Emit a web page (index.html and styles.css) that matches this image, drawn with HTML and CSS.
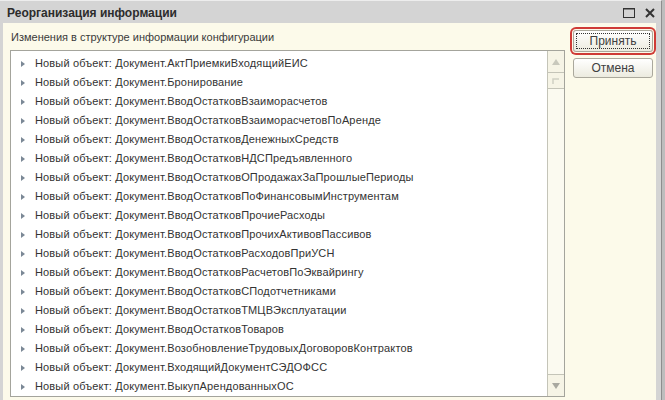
FILE: index.html
```html
<!DOCTYPE html>
<html lang="ru">
<head>
<meta charset="utf-8">
<title>Реорганизация информации</title>
<link rel="stylesheet" href="styles.css">
</head>
<body>
<div class="window">
  <div class="titlebar">
    <div class="title">Реорганизация информации</div>
    <div class="tb-icons">
      <svg class="tb-max" width="12" height="10" viewBox="0 0 12 10"><rect x="0.5" y="0.5" width="11" height="9" fill="none" stroke="#333" stroke-width="1"/><line x1="0" y1="1" x2="12" y2="1" stroke="#333" stroke-width="1"/></svg>
      <svg class="tb-close" width="10" height="10" viewBox="0 0 10 10"><path d="M1 1 L9 9 M9 1 L1 9" stroke="#333" stroke-width="2"/></svg>
    </div>
  </div>
  <div class="client">
    <div class="main">
      <div class="label">Изменения в структуре информации конфигурации</div>
      <div class="listbox">
        <div class="rows">
          <div class="row"><span class="tri"></span>Новый объект: Документ.АктПриемкиВходящийЕИС</div>
          <div class="row"><span class="tri"></span>Новый объект: Документ.Бронирование</div>
          <div class="row"><span class="tri"></span>Новый объект: Документ.ВводОстатковВзаиморасчетов</div>
          <div class="row"><span class="tri"></span>Новый объект: Документ.ВводОстатковВзаиморасчетовПоАренде</div>
          <div class="row"><span class="tri"></span>Новый объект: Документ.ВводОстатковДенежныхСредств</div>
          <div class="row"><span class="tri"></span>Новый объект: Документ.ВводОстатковНДСПредъявленного</div>
          <div class="row"><span class="tri"></span>Новый объект: Документ.ВводОстатковОПродажахЗаПрошлыеПериоды</div>
          <div class="row"><span class="tri"></span>Новый объект: Документ.ВводОстатковПоФинансовымИнструментам</div>
          <div class="row"><span class="tri"></span>Новый объект: Документ.ВводОстатковПрочиеРасходы</div>
          <div class="row"><span class="tri"></span>Новый объект: Документ.ВводОстатковПрочихАктивовПассивов</div>
          <div class="row"><span class="tri"></span>Новый объект: Документ.ВводОстатковРасходовПриУСН</div>
          <div class="row"><span class="tri"></span>Новый объект: Документ.ВводОстатковРасчетовПоЭквайрингу</div>
          <div class="row"><span class="tri"></span>Новый объект: Документ.ВводОстатковСПодотчетниками</div>
          <div class="row"><span class="tri"></span>Новый объект: Документ.ВводОстатковТМЦВЭксплуатации</div>
          <div class="row"><span class="tri"></span>Новый объект: Документ.ВводОстатковТоваров</div>
          <div class="row"><span class="tri"></span>Новый объект: Документ.ВозобновлениеТрудовыхДоговоровКонтрактов</div>
          <div class="row"><span class="tri"></span>Новый объект: Документ.ВходящийДокументСЭДОФСС</div>
          <div class="row"><span class="tri"></span>Новый объект: Документ.ВыкупАрендованныхОС</div>
        </div>
        <div class="scrollbar">
          <div class="sb-btn"><svg width="8" height="6" viewBox="0 0 8 6"><path d="M4 0 L8 6 L0 6 Z" fill="#c8c8bc"/></svg></div>
          <div class="sb-thumb"><svg width="8" height="8" viewBox="0 0 8 8"><path d="M1 7 L1 2 L7 2" fill="none" stroke="#d0d0c4" stroke-width="1.5"/></svg></div>
          <div class="sb-track"></div>
          <div class="sb-btn"><svg width="8" height="6" viewBox="0 0 8 6"><path d="M0 0 L8 0 L4 6 Z" fill="#a8a8a0"/></svg></div>
        </div>
      </div>
    </div>
    <div class="buttons">
      <div class="btn primary"><span class="focus">Принять</span></div>
      <div class="btn">Отмена</div>
    </div>
  </div>
</div>
</body>
</html>
```

FILE: styles.css
```css
html, body {
  margin: 0;
  padding: 0;
}
body {
  width: 665px;
  height: 400px;
  overflow: hidden;
  background: #bdbdbd;
  font-family: "Liberation Sans", Arial, sans-serif;
}
.window {
  width: 662px;
  height: 400px;
  box-sizing: border-box;
  display: flex;
  flex-direction: column;
  background: #d4d4d4;
  border-top: 1px solid #ededed;
  border-right: 1px solid #8e8e8e;
  padding: 0 5px 4px 3px;
}
.titlebar {
  height: 22px;
  flex: none;
  display: flex;
  align-items: center;
  justify-content: space-between;
  padding-left: 4px;
  padding-right: 1px;
}
.title {
  font-weight: bold;
  font-size: 12px;
  color: #2c2c2c;
  padding-top: 1px;
}
.tb-icons {
  display: flex;
  align-items: center;
  gap: 10px;
  padding-top: 2px;
}
.client {
  flex: 1;
  display: flex;
  background: #fcfaea;
  padding: 7px 3px 6px 7px;
  gap: 8px;
  border-bottom: 1px solid #c8c8c0;
}
.main {
  flex: 1;
  display: flex;
  flex-direction: column;
}
.label {
  font-size: 11px;
  line-height: 14px;
  color: #3a3a3a;
  margin-bottom: 6px;
  padding-left: 1px;
}
.listbox {
  flex: 1;
  display: flex;
  background: #ffffff;
  border: 1px solid #a4a49c;
  overflow: hidden;
}
.rows {
  flex: 1;
  padding-top: 3px;
  overflow: hidden;
}
.row {
  height: 19px;
  line-height: 19px;
  font-size: 11px;
  letter-spacing: 0.15px;
  color: #333;
  white-space: nowrap;
  display: flex;
  align-items: center;
  padding-left: 10px;
}
.tri {
  width: 0;
  height: 0;
  border-left: 4px solid #7b8896;
  border-top: 3.5px solid transparent;
  border-bottom: 3.5px solid transparent;
  margin-right: 10px;
}
.scrollbar {
  width: 16px;
  flex: none;
  border-left: 1px solid #c4c4b8;
  background: #fbfaf0;
  display: flex;
  flex-direction: column;
}
.sb-btn {
  height: 21px;
  display: flex;
  align-items: center;
  justify-content: center;
  border-bottom: 1px solid #c4c4b8;
  background: #f6f4e6;
}
.sb-btn:last-child {
  border-bottom: none;
  border-top: 1px solid #c4c4b8;
}
.sb-thumb {
  height: 15px;
  display: flex;
  align-items: center;
  justify-content: center;
  border-bottom: 1px solid #c4c4b8;
  background: #f6f4e6;
}
.sb-track {
  flex: 1;
}
.buttons {
  width: 80px;
  flex: none;
  display: flex;
  flex-direction: column;
  gap: 6px;
}
.btn {
  height: 20px;
  box-sizing: border-box;
  border: 1px solid #aaa89c;
  border-radius: 3px;
  background: linear-gradient(#ffffff, #ecebdf);
  display: flex;
  align-items: center;
  justify-content: center;
  font-size: 12px;
  color: #404040;
}
.primary {
  height: 22px;
  box-shadow: 0 0 0 1px #fcfaea, 0 0 0 3px #cf3b36;
  border-radius: 3px;
}
.focus {
  flex: 1;
  align-self: stretch;
  margin: 2px;
  border: 1px dotted #333;
  display: flex;
  align-items: center;
  justify-content: center;
}
```
